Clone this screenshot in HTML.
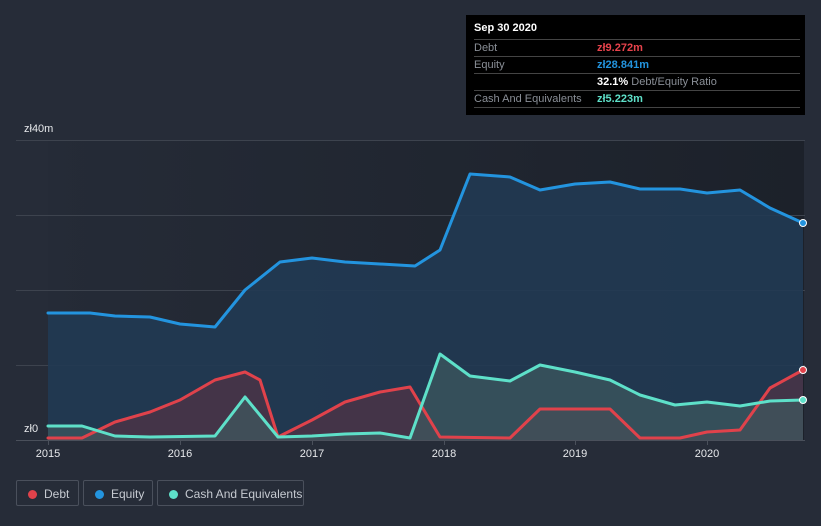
<!DOCTYPE html>
<html><head><meta charset="utf-8"><style>
html,body{margin:0;padding:0;width:821px;height:526px;background:#262c38;overflow:hidden;font-family:"Liberation Sans",sans-serif}
.tt{position:absolute;left:466px;top:15px;width:339px;height:100px;background:#000;}
.tt .r{position:absolute;left:8px;right:5px;height:16px;border-bottom:1px solid #444;font-size:11px;color:#8a8f97;line-height:17px}
.tt .v{position:absolute;left:123px;font-weight:bold}
.leg{position:absolute;top:480px;height:26px;border:1px solid #4a505c;border-radius:2px;color:#c6cad1;font-size:12px;line-height:26px;box-sizing:border-box}
.leg i{position:absolute;left:11px;top:9px;width:9px;height:9px;border-radius:50%}
.leg span{position:absolute;left:27px}
</style></head><body>
<svg width="821" height="526" style="position:absolute;left:0;top:0">
<defs><linearGradient id="bg" x1="0" x2="1"><stop offset="0" stop-color="#252b37"/><stop offset="1" stop-color="#1c212a"/></linearGradient></defs>
<rect x="48" y="140" width="756" height="300" fill="url(#bg)"/>
<g stroke="#3d434e" stroke-width="1"><line x1="16" y1="140.5" x2="805" y2="140.5"/><line x1="16" y1="215.5" x2="805" y2="215.5"/><line x1="16" y1="290.5" x2="805" y2="290.5"/><line x1="16" y1="365.5" x2="805" y2="365.5"/></g>
<polygon fill="#213a53" fill-opacity="0.9" points="48,313 90,313 115,316 150,317 180,324 215,327 245,290 280,262 312,258 345,262 380,264 415,266 440,250 470,174 510,177 540,190 575,184 610,182 640,189 680,189 707,193 740,190 770,208 803,223 803,440 48,440"/>
<polygon fill="#4a3447" fill-opacity="0.85" points="48,438 82,438 115,422 150,412 180,400 215,380 245,372 260,380 278,437 312,420 345,402 380,392 410,387 440,437 510,438 540,409 610,409 640,438 680,438 707,432 740,430 770,388 803,370 803,440 48,440"/>
<polygon fill="#3f5a60" fill-opacity="0.7" points="48,426 82,426 115,436 150,437 215,436 245,397 278,437 312,436 345,434 380,433 410,438 440,354 470,376 510,381 540,365 575,372 610,380 640,395 675,405 707,402 740,406 770,401 803,400 803,440 48,440"/>
<g fill="none" stroke-width="3" stroke-linejoin="round" stroke-linecap="round">
<polyline stroke="#2394df" points="48,313 90,313 115,316 150,317 180,324 215,327 245,290 280,262 312,258 345,262 380,264 415,266 440,250 470,174 510,177 540,190 575,184 610,182 640,189 680,189 707,193 740,190 770,208 803,223"/>
<polyline stroke="#e0424b" points="48,438 82,438 115,422 150,412 180,400 215,380 245,372 260,380 278,437 312,420 345,402 380,392 410,387 440,437 510,438 540,409 610,409 640,438 680,438 707,432 740,430 770,388 803,370"/>
<polyline stroke="#5ee0c9" points="48,426 82,426 115,436 150,437 215,436 245,397 278,437 312,436 345,434 380,433 410,438 440,354 470,376 510,381 540,365 575,372 610,380 640,395 675,405 707,402 740,406 770,401 803,400"/>
</g>
<line x1="16" y1="440.5" x2="805" y2="440.5" stroke="#4a505b"/>
<g stroke="#4a505b"><line x1="48.5" y1="440" x2="48.5" y2="445"/><line x1="180.5" y1="440" x2="180.5" y2="445"/><line x1="312.5" y1="440" x2="312.5" y2="445"/><line x1="444.5" y1="440" x2="444.5" y2="445"/><line x1="575.5" y1="440" x2="575.5" y2="445"/><line x1="707.5" y1="440" x2="707.5" y2="445"/></g>
<circle cx="803" cy="223" r="3.5" fill="#2394df" stroke="#fff" stroke-width="1"/>
<circle cx="803" cy="370" r="3.5" fill="#e0424b" stroke="#fff" stroke-width="1"/>
<circle cx="803" cy="400" r="3.5" fill="#5ee0c9" stroke="#fff" stroke-width="1"/>
<g fill="#e6e8eb" font-size="11" font-family="Liberation Sans, sans-serif">
<text x="24" y="132">zł40m</text><text x="24" y="432">zł0</text>
<g text-anchor="middle"><text x="48" y="457">2015</text><text x="180" y="457">2016</text><text x="312" y="457">2017</text><text x="444" y="457">2018</text><text x="575" y="457">2019</text><text x="707" y="457">2020</text></g>
</g>
</svg>
<div class="tt">
<div style="position:absolute;left:8px;right:5px;top:7px;height:17px;border-bottom:1px solid #444;color:#fff;font-weight:bold;font-size:11px">Sep 30 2020</div>
<div class="r" style="top:25px">Debt<span class="v" style="color:#e8434c">zł9.272m</span></div>
<div class="r" style="top:42px">Equity<span class="v" style="color:#2394df">zł28.841m</span></div>
<div class="r" style="top:59px"><span class="v" style="font-weight:normal"><b style="color:#fff">32.1%</b> Debt/Equity Ratio</span></div>
<div class="r" style="top:76px">Cash And Equivalents<span class="v" style="color:#5ee0c9">zł5.223m</span></div>
</div>
<div class="leg" style="left:16px;width:63px"><i style="background:#e0424b"></i><span>Debt</span></div>
<div class="leg" style="left:83px;width:70px"><i style="background:#2394df"></i><span>Equity</span></div>
<div class="leg" style="left:157px;width:147px"><i style="background:#5ee0c9"></i><span>Cash And Equivalents</span></div>
</body></html>
